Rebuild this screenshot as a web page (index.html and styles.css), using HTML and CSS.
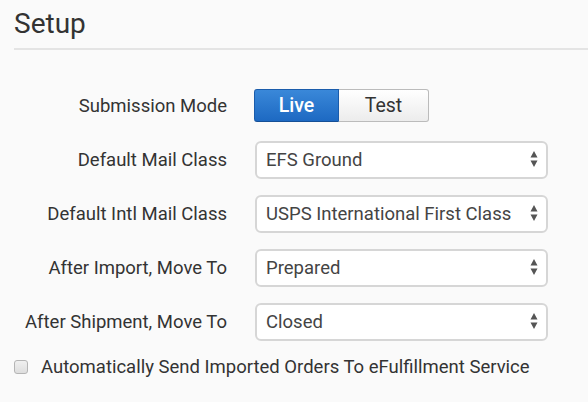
FILE: index.html
```html
<!DOCTYPE html>
<html>
<head>
<meta charset="utf-8">
<link rel="stylesheet" href="styles.css">
</head>
<body>
<div class="page">
  <h1 class="title">Setup</h1>
  <div class="form">
    <div class="row">
      <label class="label">Submission Mode</label>
      <div class="toggle">
        <button class="tbtn live">Live</button>
        <button class="tbtn test">Test</button>
      </div>
    </div>
    <div class="row">
      <label class="label">Default Mail Class</label>
      <div class="sel">
        <select><option>EFS Ground</option></select>
        <svg class="arrows" width="8" height="16" viewBox="0 0 8 16"><path d="M4 0 L7.5 6.5 L0.5 6.5 Z M4 16 L7.5 9.5 L0.5 9.5 Z" fill="#555"/></svg>
      </div>
    </div>
    <div class="row">
      <label class="label">Default Intl Mail Class</label>
      <div class="sel">
        <select><option>USPS International First Class</option></select>
        <svg class="arrows" width="8" height="16" viewBox="0 0 8 16"><path d="M4 0 L7.5 6.5 L0.5 6.5 Z M4 16 L7.5 9.5 L0.5 9.5 Z" fill="#555"/></svg>
      </div>
    </div>
    <div class="row">
      <label class="label">After Import, Move To</label>
      <div class="sel">
        <select><option>Prepared</option></select>
        <svg class="arrows" width="8" height="16" viewBox="0 0 8 16"><path d="M4 0 L7.5 6.5 L0.5 6.5 Z M4 16 L7.5 9.5 L0.5 9.5 Z" fill="#555"/></svg>
      </div>
    </div>
    <div class="row">
      <label class="label">After Shipment, Move To</label>
      <div class="sel">
        <select><option>Closed</option></select>
        <svg class="arrows" width="8" height="16" viewBox="0 0 8 16"><path d="M4 0 L7.5 6.5 L0.5 6.5 Z M4 16 L7.5 9.5 L0.5 9.5 Z" fill="#555"/></svg>
      </div>
    </div>
    <div class="check-row">
      <span class="cbox"></span>
      <span class="check-label">Automatically Send Imported Orders To eFulfillment Service</span>
    </div>
  </div>
</div>
</body>
</html>
```
FILE: styles.css
```css
html, body {
  margin: 0;
  padding: 0;
  background: #fafafa;
  font-family: Roboto, "Liberation Sans", sans-serif;
  color: #333;
  overflow: hidden;
}
.page {
  padding: 0 0 0 14px;
}
.title {
  margin: 0;
  font-size: 28px;
  font-weight: 400;
  line-height: 30px;
  padding-top: 9px;
  padding-bottom: 9px;
  border-bottom: 2px solid #e4e4e4;
  color: #333;
}
.form {
  padding-top: 37px;
  display: flex;
  flex-direction: column;
  gap: 17px;
}
.row {
  display: flex;
  align-items: center;
  height: 37px;
}
.label {
  width: 213px;
  text-align: right;
  font-size: 18.5px;
  color: #333;
  margin-right: 27px;
  white-space: nowrap;
}
.toggle {
  display: flex;
  height: 33px;
}
.tbtn {
  font-family: Roboto, "Liberation Sans", sans-serif;
  font-size: 19.5px;
  height: 33px;
  margin: 0;
  padding: 0;
  cursor: pointer;
}
.live {
  width: 85px;
  color: #fff;
  font-weight: 500;
  background: linear-gradient(#3a88d9, #1d69c2);
  border: 1px solid #1a5cab;
  border-bottom-color: #154f96;
  border-radius: 3px 0 0 3px;
}
.test {
  width: 90px;
  color: #333;
  background: linear-gradient(#ffffff, #ececec);
  border: 1px solid #bbb;
  border-left: none;
  border-radius: 0 3px 3px 0;
}
.sel {
  position: relative;
  width: 293px;
  height: 38px;
  margin-left: 1px;
}
.sel select {
  -webkit-appearance: none;
  appearance: none;
  width: 100%;
  height: 100%;
  box-sizing: border-box;
  border: 2px solid #d6d6d6;
  border-radius: 6px;
  background: #fff;
  font-family: Roboto, "Liberation Sans", sans-serif;
  font-size: 18.5px;
  color: #444;
  padding: 0 0 0 9px;
  outline: none;
}
.arrows {
  position: absolute;
  right: 10px;
  top: 10px;
  pointer-events: none;
}
.check-row {
  display: flex;
  align-items: center;
  margin-top: 0;
  height: 20px;
}
.cbox {
  width: 12px;
  height: 12px;
  border: 1px solid #b5b5b5;
  border-radius: 3px;
  background: linear-gradient(#f0f0f0, #dedede);
  margin-left: 0;
  margin-right: 13px;
}
.check-label {
  font-size: 18.5px;
  color: #333;
}
```
